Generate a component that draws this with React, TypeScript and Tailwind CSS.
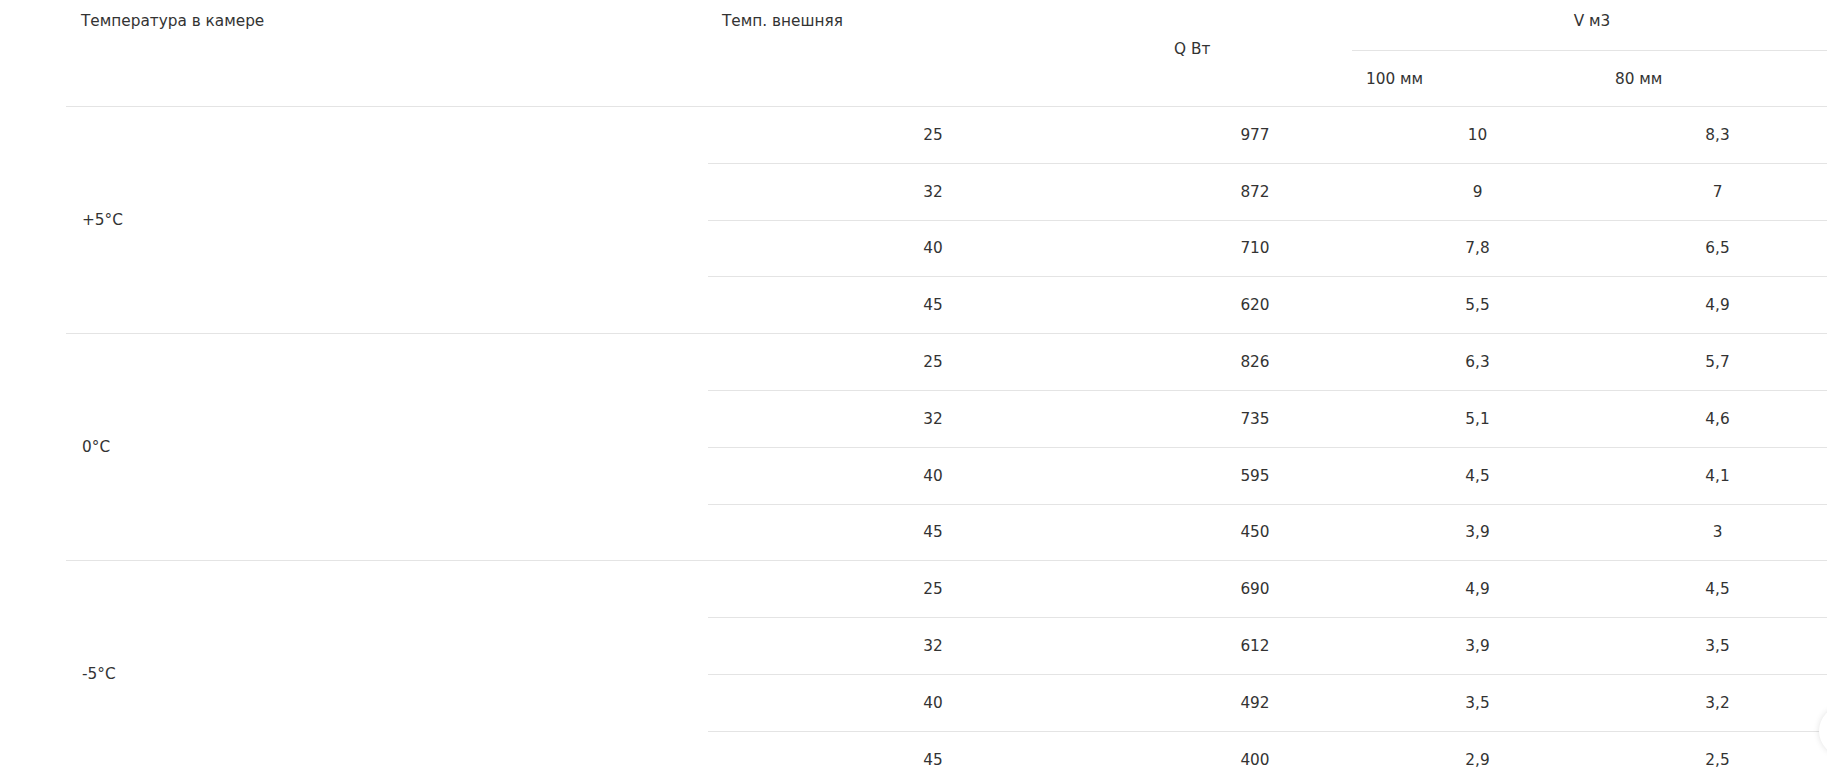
const groups = [
  {
    label: "+5°C",
    rows: [
      ["25", "977", "10", "8,3"],
      ["32", "872", "9", "7"],
      ["40", "710", "7,8", "6,5"],
      ["45", "620", "5,5", "4,9"],
    ],
  },
  {
    label: "0°C",
    rows: [
      ["25", "826", "6,3", "5,7"],
      ["32", "735", "5,1", "4,6"],
      ["40", "595", "4,5", "4,1"],
      ["45", "450", "3,9", "3"],
    ],
  },
  {
    label: "-5°C",
    rows: [
      ["25", "690", "4,9", "4,5"],
      ["32", "612", "3,9", "3,5"],
      ["40", "492", "3,5", "3,2"],
      ["45", "400", "2,9", "2,5"],
    ],
  },
];

export default function App() {
  return (
    <div className="relative h-[780px] w-full overflow-hidden bg-white font-['DejaVu_Sans',sans-serif] text-[15.3px] leading-5 text-[#333]">
      <table className="ml-[66px] w-[1766px] table-fixed border-separate border-spacing-0">
        <colgroup>
          <col className="w-[642px]" />
          <col className="w-[450px]" />
          <col className="w-[194px]" />
          <col className="w-[251px]" />
          <col className="w-[229px]" />
        </colgroup>
        <thead>
          <tr className="h-[51px]">
            <th
              rowSpan={2}
              className="border-b border-[#e4e4e4] pl-[15px] pt-[11px] text-left align-top font-normal"
            >
              Температура в камере
            </th>
            <th
              rowSpan={2}
              className="border-b border-[#e4e4e4] pl-[14px] pt-[11px] text-left align-top font-normal"
            >
              Темп. внешняя
            </th>
            <th
              rowSpan={2}
              className="border-b border-[#e4e4e4] pl-[16px] pt-[39px] text-left align-top font-normal"
            >
              Q Вт
            </th>
            <th
              colSpan={2}
              className="border-b border-[#e4e4e4] pt-[11px] text-center align-top font-normal"
            >
              V м3
            </th>
          </tr>
          <tr className="h-[56px]">
            <th className="border-b border-[#e4e4e4] pl-[14px] text-left align-middle font-normal">
              100 мм
            </th>
            <th className="border-b border-[#e4e4e4] pl-[12px] text-left align-middle font-normal">
              80 мм
            </th>
          </tr>
        </thead>
        <tbody>
          {groups.map((g) =>
            g.rows.map((r, i) => (
              <tr key={g.label + i} className="h-[56.8px]">
                {i === 0 && (
                  <td
                    rowSpan={4}
                    className="border-b border-[#e4e4e4] pl-[16px] align-middle"
                  >
                    {g.label}
                  </td>
                )}
                {r.map((v, j) => (
                  <td
                    key={j}
                    className="border-b border-[#e4e4e4] text-center align-middle"
                  >
                    {v}
                  </td>
                ))}
              </tr>
            ))
          )}
        </tbody>
      </table>
      <div className="absolute left-[1819px] top-[706px] h-[50px] w-[50px] rounded-full bg-white shadow-[0_0_6px_rgba(0,0,0,0.12)]" />
    </div>
  );
}
